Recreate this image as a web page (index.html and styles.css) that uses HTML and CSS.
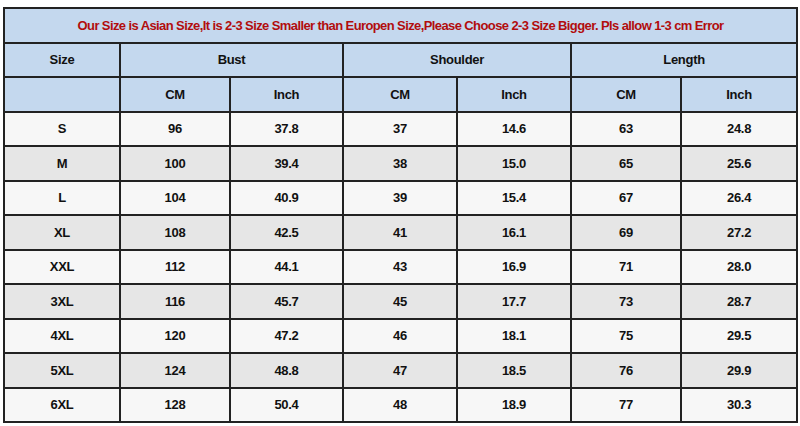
FILE: index.html
```html
<!DOCTYPE html>
<html>
<head>
<meta charset="utf-8">
<link rel="stylesheet" href="styles.css">
</head>
<body>
<div class="wrap">
<table class="chart">
  <colgroup>
    <col class="c1"><col class="c2"><col class="c3"><col class="c4"><col class="c5"><col class="c6"><col class="c7">
  </colgroup>
  <tr class="head"><td colspan="7" class="title">Our Size is Asian Size,It is 2-3 Size Smaller than Europen Size,Please Choose 2-3 Size Bigger. Pls allow 1-3 cm Error</td></tr>
  <tr class="head"><td>Size</td><td colspan="2">Bust</td><td colspan="2">Shoulder</td><td colspan="2">Length</td></tr>
  <tr class="head"><td></td><td>CM</td><td>Inch</td><td>CM</td><td>Inch</td><td>CM</td><td>Inch</td></tr>
  <tr class="light"><td>S</td><td>96</td><td>37.8</td><td>37</td><td>14.6</td><td>63</td><td>24.8</td></tr>
  <tr class="dark"><td>M</td><td>100</td><td>39.4</td><td>38</td><td>15.0</td><td>65</td><td>25.6</td></tr>
  <tr class="light"><td>L</td><td>104</td><td>40.9</td><td>39</td><td>15.4</td><td>67</td><td>26.4</td></tr>
  <tr class="dark"><td>XL</td><td>108</td><td>42.5</td><td>41</td><td>16.1</td><td>69</td><td>27.2</td></tr>
  <tr class="light"><td>XXL</td><td>112</td><td>44.1</td><td>43</td><td>16.9</td><td>71</td><td>28.0</td></tr>
  <tr class="dark"><td>3XL</td><td>116</td><td>45.7</td><td>45</td><td>17.7</td><td>73</td><td>28.7</td></tr>
  <tr class="light"><td>4XL</td><td>120</td><td>47.2</td><td>46</td><td>18.1</td><td>75</td><td>29.5</td></tr>
  <tr class="dark"><td>5XL</td><td>124</td><td>48.8</td><td>47</td><td>18.5</td><td>76</td><td>29.9</td></tr>
  <tr class="light"><td>6XL</td><td>128</td><td>50.4</td><td>48</td><td>18.9</td><td>77</td><td>30.3</td></tr>
</table>
</div>
</body>
</html>
```
FILE: styles.css
```css
html, body {
  margin: 0;
  padding: 0;
  background: #ffffff;
}
.wrap {
  padding: 7px 4px 0 3px;
}
.chart {
  width: 793px;
  border-collapse: collapse;
  table-layout: fixed;
  border: 2px solid #222;
  font-family: "Liberation Sans", Arial, sans-serif;
  font-weight: bold;
  font-size: 13px;
  letter-spacing: -0.3px;
  color: #111;
}
.c1 { width: 116px; }
.c2 { width: 110px; }
.c3 { width: 113px; }
.c4 { width: 114px; }
.c5 { width: 114px; }
.c6 { width: 110px; }
.c7 { width: 116px; }
.chart td {
  border: 2px solid #222;
  height: 32.5px;
  padding: 0;
  text-align: center;
  vertical-align: middle;
}
.head td {
  background: #c4d8ee;
}
.title {
  color: #b20d0d;
  letter-spacing: -0.6px;
}
.light td {
  background: #f7f7f7;
}
.dark td {
  background: #e6e6e6;
}
```
